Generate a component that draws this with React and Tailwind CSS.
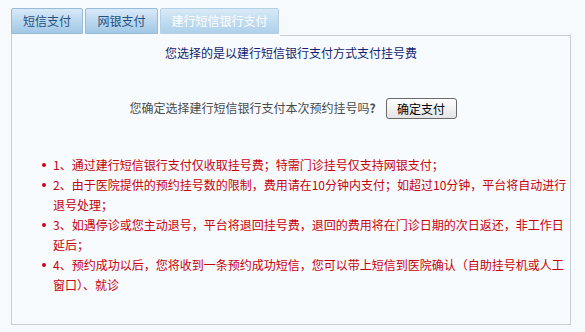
const FONT = { fontFamily: '"SimSun", "Noto Sans CJK SC", sans-serif' };

const tabs = [
  { label: "短信支付", w: "w-[72px]", active: false },
  { label: "网银支付", w: "w-[73px]", active: false },
  { label: "建行短信银行支付", w: "w-[119px]", active: true },
];

const notes = [
  ["1、通过建行短信银行支付仅收取挂号费；特需门诊挂号仅支持网银支付；"],
  ["2、由于医院提供的预约挂号数的限制，费用请在10分钟内支付；如超过10分钟，平台将自动进行", "退号处理；"],
  ["3、如遇停诊或您主动退号，平台将退回挂号费，退回的费用将在门诊日期的次日返还，非工作日", "延后；"],
  ["4、预约成功以后，您将收到一条预约成功短信，您可以带上短信到医院确认（自助挂号机或人工", "窗口）、就诊"],
];

export default function App() {
  return (
    <div className="w-[585px] h-[332px] bg-[#f6fafd] pt-[8px] pl-[11px] text-[12px]" style={FONT}>
      <div className="w-[560px]">
        <div className="flex gap-[2px] h-[26px]">
          {tabs.map((t) => (
            <div
              key={t.label}
              className={`${t.w} h-[26px] flex items-center justify-center border rounded-t-[2px] ${
                t.active
                  ? "border-[#b4d0e6] bg-gradient-to-b from-[#d9eaf7] via-[#c2dcf0] to-[#aed0ea] text-white"
                  : "border-[#98bcd8] bg-gradient-to-b from-[#d8eaf8] via-[#bcd8ef] to-[#a2c8e6] text-[#24507e]"
              }`}
            >
              {t.label}
            </div>
          ))}
        </div>
        <div className="border-x border-b border-[#c6ced6] bg-[#f7fbfe] h-[291px]">
          <div className="ml-[268px] h-[2px] border-b border-[#c6ced6]" />
          <div className="text-center text-[#141c6e] leading-[16px] mt-[9px]">
            您选择的是以建行短信银行支付方式支付挂号费
          </div>
          <div className="flex items-center justify-center mt-[36px] h-[22px] text-[#4a4a4a]">
            <span className="ml-[4px]">您确定选择建行短信银行支付本次预约挂号吗</span>
            <span className="font-bold">?</span>
            <button
              className="ml-[10px] w-[71px] h-[21px] border border-[#6a6a6a] rounded-[3px] bg-gradient-to-b from-[#ffffff] to-[#e4e4e4] text-black leading-[19px]"
              style={FONT}
            >
              确定支付
            </button>
          </div>
          <ul className="mt-[36px] ml-[30px] text-[#c8000a] leading-[20px]">
            {notes.map((lines, i) => (
              <li key={i} className="flex">
                <span className="w-[11px] shrink-0 flex justify-start pt-[8px]">
                  <span className="w-[4px] h-[4px] rounded-full bg-[#d00010]" />
                </span>
                <span className="whitespace-nowrap">
                  {lines.map((l, j) => (
                    <div key={j}>{l}</div>
                  ))}
                </span>
              </li>
            ))}
          </ul>
        </div>
      </div>
    </div>
  );
}
